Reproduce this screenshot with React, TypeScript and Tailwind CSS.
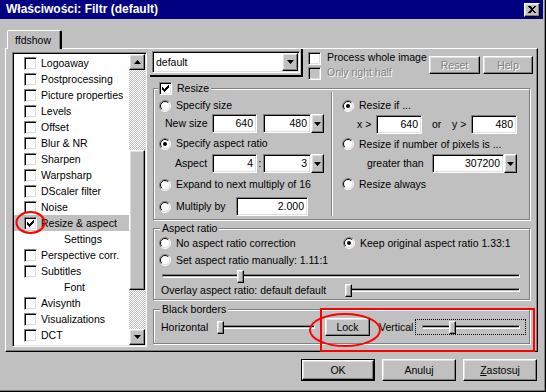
import React from "react";

const SUNKEN =
  "border border-t-[#808080] border-l-[#808080] border-r-white border-b-white shadow-[inset_1px_1px_0_#000,inset_-1px_-1px_0_#dfdfdf]";
const RAISED =
  "border border-t-white border-l-white border-r-black border-b-black shadow-[inset_-1px_-1px_0_#808080,inset_1px_1px_0_#dfdfdf]";
const DISABLED = "text-[#808080] [text-shadow:1px_1px_0_#fff]";

const CheckMark = () => (
  <svg width="7" height="7" viewBox="0 0 7 7" shapeRendering="crispEdges">
    <rect x="0" y="2" width="1" height="3" fill="#000" />
    <rect x="1" y="3" width="1" height="3" fill="#000" />
    <rect x="2" y="4" width="1" height="3" fill="#000" />
    <rect x="3" y="3" width="1" height="3" fill="#000" />
    <rect x="4" y="2" width="1" height="3" fill="#000" />
    <rect x="5" y="1" width="1" height="3" fill="#000" />
    <rect x="6" y="0" width="1" height="3" fill="#000" />
  </svg>
);

function Check({ checked, disabled }: { checked?: boolean; disabled?: boolean }) {
  return (
    <span
      className={`w-[13px] h-[13px] shrink-0 flex items-center justify-center ${SUNKEN} ${
        disabled ? "bg-[#c0c0c0]" : "bg-white"
      }`}
    >
      {checked && <CheckMark />}
    </span>
  );
}

function Radio({ on }: { on?: boolean }) {
  return (
    <svg width="12" height="12" viewBox="0 0 12 12" className="shrink-0">
      <circle cx="6" cy="6" r="5" fill="#fff" />
      <path d="M2.1 9.9 A5.5 5.5 0 0 1 9.9 2.1" stroke="#808080" fill="none" />
      <path d="M9.9 2.1 A5.5 5.5 0 0 1 2.1 9.9" stroke="#fff" fill="none" />
      <path d="M2.8 9.2 A4.5 4.5 0 0 1 9.2 2.8" stroke="#000" fill="none" />
      <path d="M9.2 2.8 A4.5 4.5 0 0 1 2.8 9.2" stroke="#dfdfdf" fill="none" />
      {on && <circle cx="6" cy="6" r="2" fill="#000" />}
    </svg>
  );
}

const Down = () => (
  <svg width="7" height="4" viewBox="0 0 7 4">
    <polygon points="0,0 7,0 3.5,4" fill="#000" />
  </svg>
);

const Up = () => (
  <svg width="7" height="4" viewBox="0 0 7 4">
    <polygon points="0,4 7,4 3.5,0" fill="#000" />
  </svg>
);

function Edit({ className, value }: { className: string; value: string }) {
  return (
    <div className={`${SUNKEN} bg-white h-[19px] flex items-center justify-end pr-[3px] shrink-0 ${className}`}>
      {value}
    </div>
  );
}

const DropBtn = () => (
  <div className={`${RAISED} bg-[#c0c0c0] w-[13px] h-[19px] flex items-center justify-center shrink-0`}>
    <Down />
  </div>
);

function Slider({ className, thumb }: { className: string; thumb: string }) {
  return (
    <div className={`relative h-[13px] shrink-0 ${className}`}>
      <div className="absolute left-0 right-0 top-[4px] h-[4px] border border-t-[#808080] border-l-[#808080] border-r-white border-b-white bg-[#c0c0c0] shadow-[inset_0_1px_0_#000]" />
      <div className={`absolute top-0 w-[7px] h-[13px] ${RAISED} bg-[#c0c0c0] ${thumb}`} />
    </div>
  );
}

function RadioLine({ on, label, className = "" }: { on?: boolean; label: string; className?: string }) {
  return (
    <div className={`flex items-center gap-[5px] ${className}`}>
      <Radio on={on} />
      <span>{label}</span>
    </div>
  );
}

const items: { t: string; checked?: boolean; sel?: boolean; sub?: boolean }[] = [
  { t: "Logoaway" },
  { t: "Postprocessing" },
  { t: "Picture properties" },
  { t: "Levels" },
  { t: "Offset" },
  { t: "Blur & NR" },
  { t: "Sharpen" },
  { t: "Warpsharp" },
  { t: "DScaler filter" },
  { t: "Noise" },
  { t: "Resize & aspect", checked: true, sel: true },
  { t: "Settings", sub: true },
  { t: "Perspective corr." },
  { t: "Subtitles" },
  { t: "Font", sub: true },
  { t: "Avisynth" },
  { t: "Visualizations" },
  { t: "DCT" },
  { t: "Grab" },
];

function FilterList() {
  return (
    <div className={`${SUNKEN} bg-white w-[135px] h-[295px] flex shrink-0 p-[1px]`}>
      <div className="flex-1 overflow-hidden pt-[1px]">
        {items.map((it) => (
          <div
            key={it.t}
            className={`h-[16px] flex items-center ${it.sub ? "pl-[50px]" : "pl-[10px] gap-[4px]"} ${
              it.sel ? "bg-[#c0c0c0]" : ""
            }`}
          >
            {!it.sub && <Check checked={it.checked} />}
            <span>{it.t}</span>
          </div>
        ))}
      </div>
      <div className="w-[16px] flex flex-col bg-[image:repeating-conic-gradient(#fff_0%_25%,#c0c0c0_0%_50%)] bg-[length:2px_2px]">
        <div className={`${RAISED} bg-[#c0c0c0] h-[16px] flex items-center justify-center`}>
          <Up />
        </div>
        <div className={`${RAISED} bg-[#c0c0c0] h-[140px] mt-[80px]`} />
        <div className={`${RAISED} bg-[#c0c0c0] h-[16px] mt-auto flex items-center justify-center`}>
          <Down />
        </div>
      </div>
    </div>
  );
}

const GROUP =
  "border border-[#808080] shadow-[inset_1px_1px_0_#fff,1px_1px_0_#fff] min-w-0 w-[377px] ml-[3px]";

function ResizeGroup() {
  return (
    <fieldset className={`${GROUP} pb-[3px]`}>
      <legend className="ml-[4px] px-[1px] h-[13px] flex items-center gap-[5px] bg-[#c0c0c0]">
        <Check checked />
        <span className="pr-[1px]">Resize</span>
      </legend>
      <div className="flex">
        <div className="w-[177px] flex flex-col pt-[2px]">
          <RadioLine label="Specify size" className="h-[17px] pl-[5px]" />
          <div className="h-[19px] flex items-center pl-[11px]">
            <span className="w-[47px]">New size</span>
            <Edit className="w-[45px]" value="640" />
            <Edit className="w-[48px] ml-[6px]" value="480" />
            <DropBtn />
          </div>
          <RadioLine on label="Specify aspect ratio" className="h-[21px] pl-[5px]" />
          <div className="h-[19px] flex items-center pl-[21px]">
            <span className="w-[37px]">Aspect</span>
            <Edit className="w-[45px]" value="4" />
            <span className="w-[6px] text-center">:</span>
            <Edit className="w-[48px]" value="3" />
            <DropBtn />
          </div>
          <RadioLine label="Expand to next multiply of 16" className="h-[23px] pl-[5px]" />
          <div className="h-[19px] mt-[1px] flex items-center pl-[5px]">
            <Radio />
            <span className="w-[60px] ml-[5px]">Multiply by</span>
            <Edit className="w-[72px]" value="2.000" />
          </div>
        </div>
        <div className="w-[2px] -mt-[3px] border-l border-l-[#808080] border-r border-r-white" />
        <div className="flex-1 flex flex-col pt-[2px]">
          <RadioLine on label="Resize if ..." className="h-[17px] pl-[9px]" />
          <div className="h-[19px] mt-[1px] flex items-center pl-[24px]">
            <span className="w-[19px]">x &gt;</span>
            <Edit className="w-[46px]" value="640" />
            <span className="w-[20px] ml-[10px]">or</span>
            <span className="w-[19px]">y &gt;</span>
            <Edit className="w-[46px]" value="480" />
          </div>
          <RadioLine label="Resize if number of pixels is ..." className="h-[20px] pl-[9px]" />
          <div className="h-[19px] flex items-center pl-[34px]">
            <span className="w-[65px]">greater than</span>
            <Edit className="w-[72px]" value="307200" />
            <DropBtn />
          </div>
          <RadioLine label="Resize always" className="h-[22px] pl-[9px]" />
        </div>
      </div>
    </fieldset>
  );
}

function AspectGroup() {
  return (
    <fieldset className={`${GROUP} mt-[2px] pb-[2px]`}>
      <legend className="ml-[6px] px-[2px] h-[13px] leading-[13px] bg-[#c0c0c0]">Aspect ratio</legend>
      <div className="h-[16px] flex items-center pl-[5px]">
        <RadioLine label="No aspect ratio correction" className="w-[184px]" />
        <RadioLine on label="Keep original aspect ratio 1.33:1" />
      </div>
      <RadioLine label="Set aspect ratio manually: 1.11:1" className="h-[18px] pl-[5px]" />
      <div className="h-[14px] flex items-center pl-[8px]">
        <Slider className="w-[358px]" thumb="left-[75px]" />
      </div>
      <div className="h-[14px] flex items-center pl-[7px]">
        <span className="w-[186px]">Overlay aspect ratio: default default</span>
        <Slider className="w-[173px]" thumb="-left-[2px]" />
      </div>
    </fieldset>
  );
}

function BordersGroup() {
  return (
    <fieldset className={`${GROUP} mt-[3px] pb-[6px]`}>
      <legend className="ml-[6px] px-[2px] h-[13px] leading-[13px] bg-[#c0c0c0]">Black borders</legend>
      <div className="h-[20px] mt-[1px] flex items-center pl-[7px]">
        <span className="w-[56px]">Horizontal</span>
        <Slider className="w-[98px]" thumb="left-0" />
        <button className={`${RAISED} bg-[#c0c0c0] w-[45px] h-[18px] ml-[10px] flex items-center justify-center`}>
          Lock
        </button>
        <span className="w-[36px] ml-[9px]">Vertical</span>
        <div className="w-[111px] h-[16px] border border-dotted border-black flex items-center pl-[6px]">
          <Slider className="w-[98px]" thumb="left-[27px]" />
        </div>
      </div>
    </fieldset>
  );
}

function Btn({ label, def, disabled, className = "" }: { label: React.ReactNode; def?: boolean; disabled?: boolean; className?: string }) {
  const inner = (
    <div className={`${RAISED} bg-[#c0c0c0] h-full flex items-center justify-center ${disabled ? DISABLED : ""}`}>
      {label}
    </div>
  );
  return def ? (
    <div className={`border border-black ${className}`}>{inner}</div>
  ) : (
    <div className={className}>{inner}</div>
  );
}

export default function App() {
  return (
    <div className="relative w-[546px] h-[392px] bg-[#c0c0c0] flex flex-col overflow-hidden font-['Liberation_Sans',Arial,sans-serif] text-[10.5px] leading-[13px] text-black shadow-[inset_-1px_-1px_0_#000,inset_-2px_-2px_0_#808080]">
      <div className="h-[19px] mr-[3px] bg-[#000080] flex items-center justify-between pl-[6px] pr-[3px] shrink-0">
        <span className="text-white font-bold text-[12px]">Właściwości: Filtr (default)</span>
        <div className={`${RAISED} bg-[#c0c0c0] w-[16px] h-[14px] flex items-center justify-center`}>
          <svg width="8" height="7" viewBox="0 0 8 7" shapeRendering="crispEdges">
            <path d="M0 0h2l2 2 2-2h2L5 3.5 8 7H6L4 5 2 7H0l3-3.5z" fill="#000" />
          </svg>
        </div>
      </div>

      <div className="flex flex-col pl-[5px] pr-[8px]">
        <div className="h-[29px] flex items-end pl-[2px]">
          <div className="w-[55px] h-[19px] -mb-[1px] z-10 bg-[#c0c0c0] border-l border-t border-l-white border-t-white border-r-2 border-r-black rounded-t-[2px] shadow-[inset_-1px_0_0_#808080] flex items-center pl-[7px]">
            ffdshow
          </div>
        </div>

        <div className="h-[304px] border border-t-white border-l-white border-r-black border-b-black shadow-[inset_-1px_-1px_0_#808080] flex pl-[6px] pt-[3px]">
          <FilterList />

          <div className="ml-[3px] flex flex-col w-[385px] -mt-[3px]">
            <div className="h-[33px] flex items-start">
              <div className="w-[153px] h-[28px] border-r-2 border-b-2 border-r-black border-b-black pl-[2px] pt-[2px]">
                <div className={`${SUNKEN} bg-white w-[148px] h-[22px] flex items-center pl-[3px] pr-[1px]`}>
                  <span className="flex-1">default</span>
                  <div className={`${RAISED} bg-[#c0c0c0] w-[16px] h-[18px] flex items-center justify-center`}>
                    <Down />
                  </div>
                </div>
              </div>
              <div className="ml-[5px] pt-[3px] flex flex-col">
                <div className="h-[15px] flex items-start gap-[6px]">
                  <Check />
                  <span className="-mt-[1px]">Process whole image</span>
                </div>
                <div className="h-[15px] flex items-start gap-[6px]">
                  <Check disabled />
                  <span className={`-mt-[1px] ${DISABLED}`}>Only right half</span>
                </div>
              </div>
              <div className="ml-auto mr-[2px] mt-[7px] flex gap-[3px]">
                <Btn label="Reset" disabled className="w-[51px] h-[18px]" />
                <Btn label="Help" disabled className="w-[50px] h-[18px]" />
              </div>
            </div>
            <ResizeGroup />
            <AspectGroup />
            <BordersGroup />
          </div>
        </div>

        <div className="flex justify-end gap-[7px] pr-[1px] mt-[7px]">
          <Btn label="OK" def className="w-[74px] h-[22px]" />
          <Btn label="Anuluj" className="w-[74px] h-[22px]" />
          <Btn
            label={
              <span>
                <span className="underline">Z</span>astosuj
              </span>
            }
            className="w-[74px] h-[22px]"
          />
        </div>
      </div>

      <svg className="absolute inset-0 pointer-events-none" width="546" height="392">
        <ellipse cx="30.5" cy="222.5" rx="14" ry="10.5" stroke="#ff0000" strokeWidth="2" fill="none" />
        <ellipse cx="345" cy="330" rx="35" ry="16" stroke="#ff0000" strokeWidth="2" fill="none" />
        <rect x="321" y="309" width="213" height="42" stroke="#ff0000" strokeWidth="2" fill="none" />
      </svg>
    </div>
  );
}
